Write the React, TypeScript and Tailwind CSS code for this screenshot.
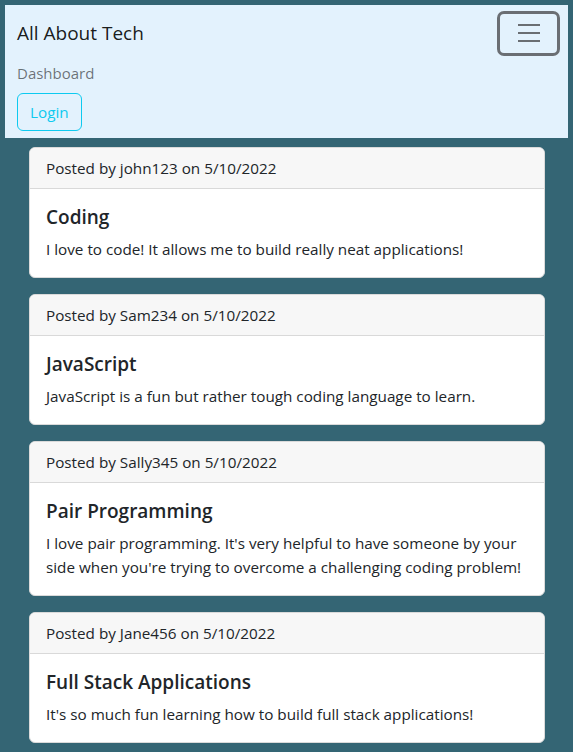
import React from "react";

const posts = [
  {
    user: "john123",
    title: "Coding",
    text: "I love to code! It allows me to build really neat applications!",
  },
  {
    user: "Sam234",
    title: "JavaScript",
    text: "JavaScript is a fun but rather tough coding language to learn.",
  },
  {
    user: "Sally345",
    title: "Pair Programming",
    text: "I love pair programming. It's very helpful to have someone by your side when you're trying to overcome a challenging coding problem!",
  },
  {
    user: "Jane456",
    title: "Full Stack Applications",
    text: "It's so much fun learning how to build full stack applications!",
  },
];

export default function App() {
  return (
    <div className="min-h-[752px] bg-[#346574] pt-[5px] font-['Open_Sans',sans-serif] text-[#212529]">
      <nav className="mx-[5px] bg-[#e3f2fd] px-3 pt-2 pb-[7px]">
        <div className="flex h-10 items-center justify-between">
          <a className="text-[19px] leading-[30px] text-black/90">All About Tech</a>
          <button className="-mr-[4px] flex h-[45px] w-[63px] items-center justify-center rounded-[7px] border-[3px] border-[#6a6e73]">
            <svg width="30" height="30" viewBox="0 0 30 30">
              <path
                d="M4 7h22M4 15h22M4 23h22"
                stroke="#6a6e73"
                strokeWidth="2"
                strokeLinecap="butt"
                fill="none"
              />
            </svg>
          </button>
        </div>
        <div className="py-2 text-[15px] leading-6 text-black/55">Dashboard</div>
        <button className="rounded-[6px] border border-[#0dcaf0] px-3 py-1.5 text-[15.25px] leading-6 text-[#0dcaf0]">
          Login
        </button>
      </nav>
      <main className="flex flex-col gap-4 pt-[9px] pb-[9px] pl-[29px] pr-[28px]">
        {posts.map((p) => (
          <div
            key={p.user}
            className="overflow-hidden rounded-[6px] border border-[#dadada] bg-white"
          >
            <div className="border-b border-[#d9d9d9] bg-[#f7f7f7] px-4 py-2 text-[15.25px] leading-6">
              Posted by {p.user} on 5/10/2022
            </div>
            <div className="p-4">
              <h5 className="mb-2 text-[19px] font-semibold leading-6">{p.title}</h5>
              <p className="text-[15.25px] leading-6">{p.text}</p>
            </div>
          </div>
        ))}
      </main>
    </div>
  );
}
